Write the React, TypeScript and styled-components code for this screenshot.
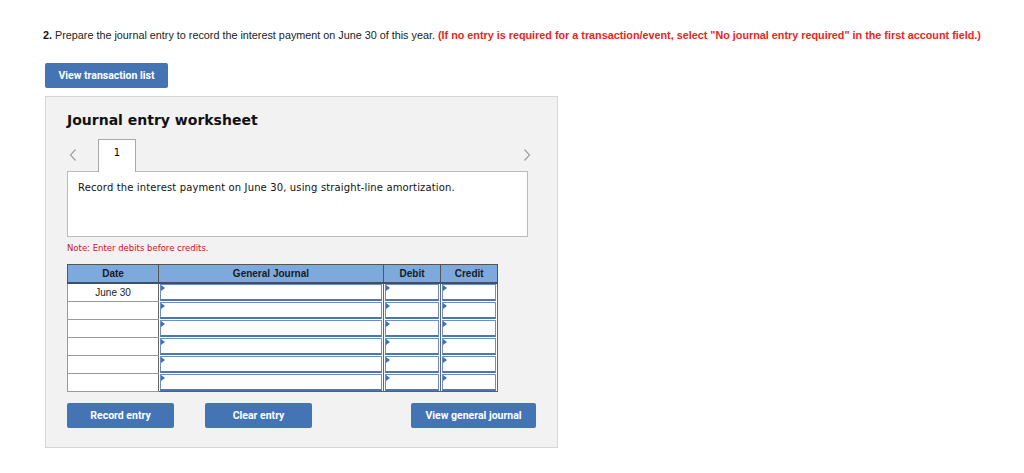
import React from "react";
import styled, { createGlobalStyle } from "styled-components";

const Global = createGlobalStyle`
  html, body { margin: 0; padding: 0; background: #ffffff; }
  body { font-family: "Liberation Sans", Arial, sans-serif; }
`;

const Page = styled.div`
  width: 1024px;
  height: 473px;
  padding: 28px 0 0 43px;
  box-sizing: border-box;
  overflow: hidden;
`;

const Question = styled.div`
  font-family: "Liberation Sans", Arial, sans-serif;
  font-size: 10.8px;
  line-height: 14px;
  color: #222;
  white-space: nowrap;
  b { font-weight: bold; color: #111; }
`;

const Warn = styled.span`
  color: #e8261e;
  font-weight: bold;
`;

const BlueButton = styled.button<{ $w: number; $gap?: number }>`
  width: ${(p) => p.$w}px;
  height: 25px;
  margin-left: ${(p) => p.$gap ?? 0}px;
  background: #4474b4;
  border: none;
  border-radius: 2px;
  color: #fff;
  font-family: "Roboto", "DejaVu Sans", sans-serif;
  font-weight: bold;
  font-size: 10.5px;
  padding: 0;
  cursor: pointer;
`;

const TopButtonRow = styled.div`
  margin: 21px 0 0 2px;
`;

const Panel = styled.div`
  margin: 8px 0 0 2px;
  width: 513px;
  height: 352px;
  box-sizing: border-box;
  background: #f2f2f2;
  border: 1px solid #d6d6d6;
  padding: 14px 0 0 21px;
`;

const Title = styled.h2`
  margin: 0;
  font-family: "DejaVu Sans", Verdana, sans-serif;
  font-weight: bold;
  font-size: 14px;
  line-height: 18px;
  color: #111;
`;

const TabRow = styled.div`
  display: flex;
  align-items: center;
  width: 466px;
  height: 32px;
  margin-top: 10px;
`;

const Arrow = styled.span`
  display: flex;
  width: 8px;
  height: 14px;
  margin: 0 2px;
`;

const Tab = styled.div`
  width: 38px;
  height: 33px;
  box-sizing: border-box;
  margin: 0 auto 0 19px;
  align-self: flex-start;
  background: #fff;
  border: 1px solid #aaa;
  border-bottom: none;
  font-family: "DejaVu Sans", Verdana, sans-serif;
  font-size: 10px;
  text-align: center;
  padding-top: 7px;
  position: relative;
  z-index: 1;
`;

const ContentBox = styled.div`
  width: 461px;
  height: 66px;
  box-sizing: border-box;
  background: #fff;
  border: 1px solid #bbb;
  padding: 10px 0 0 10px;
  font-family: "DejaVu Sans", Verdana, sans-serif;
  font-size: 10px;
  letter-spacing: 0.14px;
  color: #111;
`;

const Note = styled.div`
  margin-top: 6px;
  font-family: "DejaVu Sans", Verdana, sans-serif;
  font-size: 8.5px;
  color: #c0191c;
`;

const Table = styled.table`
  margin-top: 11px;
  border-collapse: collapse;
  width: 431px;
  border: 1px solid #5e5e5e;
  font-family: "Liberation Sans", Arial, sans-serif;
  font-size: 10px;
`;

const Th = styled.th<{ $w: number }>`
  width: ${(p) => p.$w}px;
  height: 17px;
  padding: 0;
  background: #7ea9dc;
  border: 1px solid #555;
  border-bottom: 2px solid #3d4f6a;
  font-weight: bold;
  color: #1a1a1a;
  text-align: center;
`;

const DateCell = styled.td`
  height: 17px;
  padding: 0;
  background: #fff;
  border: 1px solid #999;
  border-right: 1px solid #666;
  text-align: center;
  color: #222;
`;

const InputCell = styled.td`
  height: 17px;
  padding: 0 1px;
  background: #fff;
  border-left: 1px solid #666;
  border-right: 1px solid #666;
  border-bottom: 0;
`;

const InputBox = styled.div`
  position: relative;
  height: 14px;
  background: #fff;
  border: 1px solid #6b8fc4;
  border-bottom: 2px solid #4f75b0;
  &::before {
    content: "";
    position: absolute;
    left: 0;
    top: 0;
    border-top: 3px solid transparent;
    border-bottom: 3px solid transparent;
    border-left: 4px solid #3f6fb6;
  }
`;

const ButtonRow = styled.div`
  display: flex;
  margin-top: 11px;
  width: 469px;
`;

const Spacer = styled.div`
  flex: 1;
`;

const ChevronLeft = () => (
  <svg width="8" height="14" viewBox="0 0 8 14">
    <polyline points="6.5,1.5 1.5,7 6.5,12.5" fill="none" stroke="#a0a0a0" strokeWidth="1.2" />
  </svg>
);
const ChevronRight = () => (
  <svg width="8" height="14" viewBox="0 0 8 14">
    <polyline points="1.5,1.5 6.5,7 1.5,12.5" fill="none" stroke="#a0a0a0" strokeWidth="1.2" />
  </svg>
);

const rows = ["June 30", "", "", "", "", ""];

export default function App() {
  return (
    <Page>
      <Global />
      <Question>
        <b>2.</b> Prepare the journal entry to record the interest payment on June 30 of this year.{" "}
        <Warn>
          (If no entry is required for a transaction/event, select "No journal entry required" in the first account field.)
        </Warn>
      </Question>
      <TopButtonRow>
        <BlueButton $w={123}>View transaction list</BlueButton>
      </TopButtonRow>
      <Panel>
        <Title>Journal entry worksheet</Title>
        <TabRow>
          <Arrow><ChevronLeft /></Arrow>
          <Tab>1</Tab>
          <Arrow><ChevronRight /></Arrow>
        </TabRow>
        <ContentBox>Record the interest payment on June 30, using straight-line amortization.</ContentBox>
        <Note>Note: Enter debits before credits.</Note>
        <Table>
          <thead>
            <tr>
              <Th $w={91}>Date</Th>
              <Th $w={226}>General Journal</Th>
              <Th $w={57}>Debit</Th>
              <Th $w={56}>Credit</Th>
            </tr>
          </thead>
          <tbody>
            {rows.map((d, i) => (
              <tr key={i}>
                <DateCell>{d}</DateCell>
                <InputCell><InputBox /></InputCell>
                <InputCell><InputBox /></InputCell>
                <InputCell><InputBox /></InputCell>
              </tr>
            ))}
          </tbody>
        </Table>
        <ButtonRow>
          <BlueButton $w={107}>Record entry</BlueButton>
          <BlueButton $w={107} $gap={31}>Clear entry</BlueButton>
          <Spacer />
          <BlueButton $w={125}>View general journal</BlueButton>
        </ButtonRow>
      </Panel>
    </Page>
  );
}
